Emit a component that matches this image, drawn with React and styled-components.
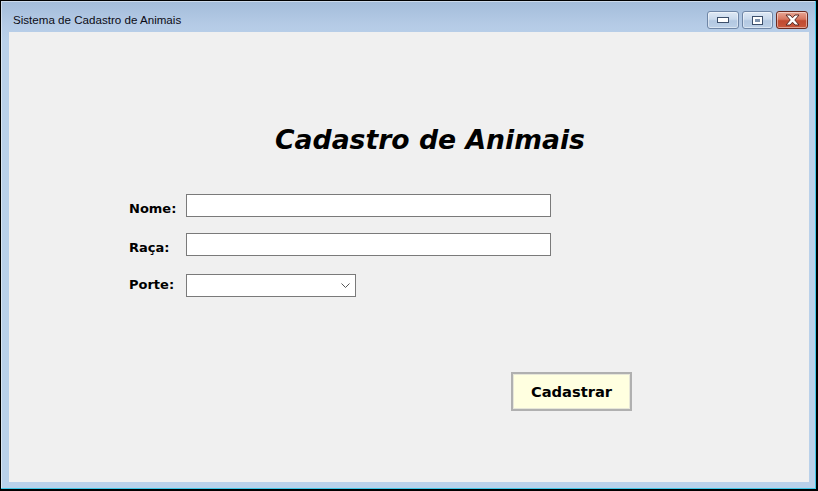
import React from 'react';
import styled, { createGlobalStyle } from 'styled-components';

const GlobalStyle = createGlobalStyle`
  html, body {
    margin: 0;
    padding: 0;
    background: #000;
    overflow: hidden;
  }
  * { box-sizing: border-box; }
`;

const Screen = styled.div`
  width: 818px;
  height: 491px;
  padding: 1px 2px 2px 1px;
  background: #000;
`;

const Window = styled.div`
  display: flex;
  flex-direction: column;
  height: 100%;
  background: linear-gradient(180deg, #a3bcda 0px, #b5cbe6 24px, #bad1ea 40px, #b9d1ea 100%);
  border-right: 1px solid #3fc6e6;
  border-bottom: 1px solid #3fc6e6;
  box-shadow: inset 1px 1px 0 rgba(255, 255, 255, 0.45);
`;

const TitleBar = styled.div`
  display: flex;
  align-items: flex-start;
  height: 31px;
  padding: 0 7px 0 12px;
`;

const Caption = styled.span`
  margin-top: 12px;
  font-family: "Liberation Sans", Arial, sans-serif;
  font-size: 11.6px;
  color: #0b0b14;
  line-height: 14px;
`;

const Controls = styled.div`
  display: flex;
  gap: 3px;
  margin-left: auto;
  margin-top: 10px;
`;

const CtrlButton = styled.div`
  display: flex;
  align-items: center;
  justify-content: center;
  width: ${(p) => p.$w}px;
  height: 18px;
  border-radius: 3px;
  border: 1px solid ${(p) => (p.$close ? '#6b2a20' : '#6f86a6')};
  background: ${(p) =>
    p.$close
      ? 'linear-gradient(180deg, #e9a795 0%, #d7765f 45%, #c04a31 55%, #c9583c 100%)'
      : 'linear-gradient(180deg, #dfe9f5 0%, #c9d9ec 45%, #b3c8e1 55%, #bcd0e7 100%)'};
  box-shadow: inset 0 0 0 1px rgba(255, 255, 255, 0.45);
`;

const Client = styled.div`
  flex: 1;
  margin: 0 6px 6px 8px;
  background: #f0f0f0;
  display: flex;
  flex-direction: column;
  padding: 92px 0 0 120px;
  font-family: "DejaVu Sans", Verdana, sans-serif;
  color: #000;
`;

const Heading = styled.h1`
  margin: 0 0 0 146px;
  font-size: 26.67px;
  line-height: 32px;
  font-weight: bold;
  font-style: italic;
`;

const Form = styled.div`
  display: grid;
  grid-template-columns: 57px auto;
  align-items: start;
  justify-content: start;
  margin-top: 38px;
`;

const Label = styled.label`
  font-size: 13px;
  font-weight: bold;
  line-height: 16px;
  padding-top: ${(p) => p.$offset}px;
`;

const Field = styled.div`
  width: ${(p) => p.$w}px;
  height: 23px;
  margin-bottom: ${(p) => p.$gap}px;
  background: #fff;
  border: 1px solid #7a7a7a;
  display: flex;
  align-items: center;
  justify-content: flex-end;
  padding-right: 5px;
`;

const SubmitRow = styled.div`
  display: flex;
  padding-left: 382px;
  margin-top: 75px;
`;

const Submit = styled.button`
  width: 121px;
  height: 39px;
  background: #ffffe0;
  border: 2px solid #b0b0b0;
  box-shadow: inset 0 0 0 1px #e6e6d8;
  font-family: "DejaVu Sans", Verdana, sans-serif;
  font-size: 14.67px;
  font-weight: bold;
  color: #000;
  padding: 0;
`;

const MinIcon = () => (
  <svg width="12" height="6" viewBox="0 0 12 6">
    <rect x="0.5" y="0.5" width="11" height="5" fill="#fff" stroke="#3c4f6b" />
  </svg>
);

const MaxIcon = () => (
  <svg width="11" height="9" viewBox="0 0 11 9">
    <rect x="0.5" y="0.5" width="10" height="8" fill="#fff" stroke="#3c4f6b" />
    <rect x="3" y="3" width="5" height="3" fill="#7f93ad" />
  </svg>
);

const CloseIcon = () => (
  <svg width="15" height="12" viewBox="0 0 15 12">
    <path
      d="M1 1 H5 L7.5 3.8 L10 1 H14 L9.8 6 L14 11 H10 L7.5 8.2 L5 11 H1 L5.2 6 Z"
      fill="#fff"
      stroke="#5a2a24"
      strokeWidth="1"
      strokeLinejoin="round"
    />
  </svg>
);

const Chevron = () => (
  <svg width="9" height="5" viewBox="0 0 9 5">
    <path d="M0.5 0.5 L4.5 4.5 L8.5 0.5" fill="none" stroke="#555" strokeWidth="1" />
  </svg>
);

export default function App() {
  return (
    <>
      <GlobalStyle />
      <Screen>
        <Window>
          <TitleBar>
            <Caption>Sistema de Cadastro de Animais</Caption>
            <Controls>
              <CtrlButton $w={32}>
                <MinIcon />
              </CtrlButton>
              <CtrlButton $w={31}>
                <MaxIcon />
              </CtrlButton>
              <CtrlButton $w={32} $close>
                <CloseIcon />
              </CtrlButton>
            </Controls>
          </TitleBar>
          <Client>
            <Heading>Cadastro de Animais</Heading>
            <Form>
              <Label $offset={7}>Nome:</Label>
              <Field $w={365} $gap={16} />
              <Label $offset={7}>Raça:</Label>
              <Field $w={365} $gap={18} />
              <Label $offset={3}>Porte:</Label>
              <Field $w={170} $gap={0}>
                <Chevron />
              </Field>
            </Form>
            <SubmitRow>
              <Submit>Cadastrar</Submit>
            </SubmitRow>
          </Client>
        </Window>
      </Screen>
    </>
  );
}
